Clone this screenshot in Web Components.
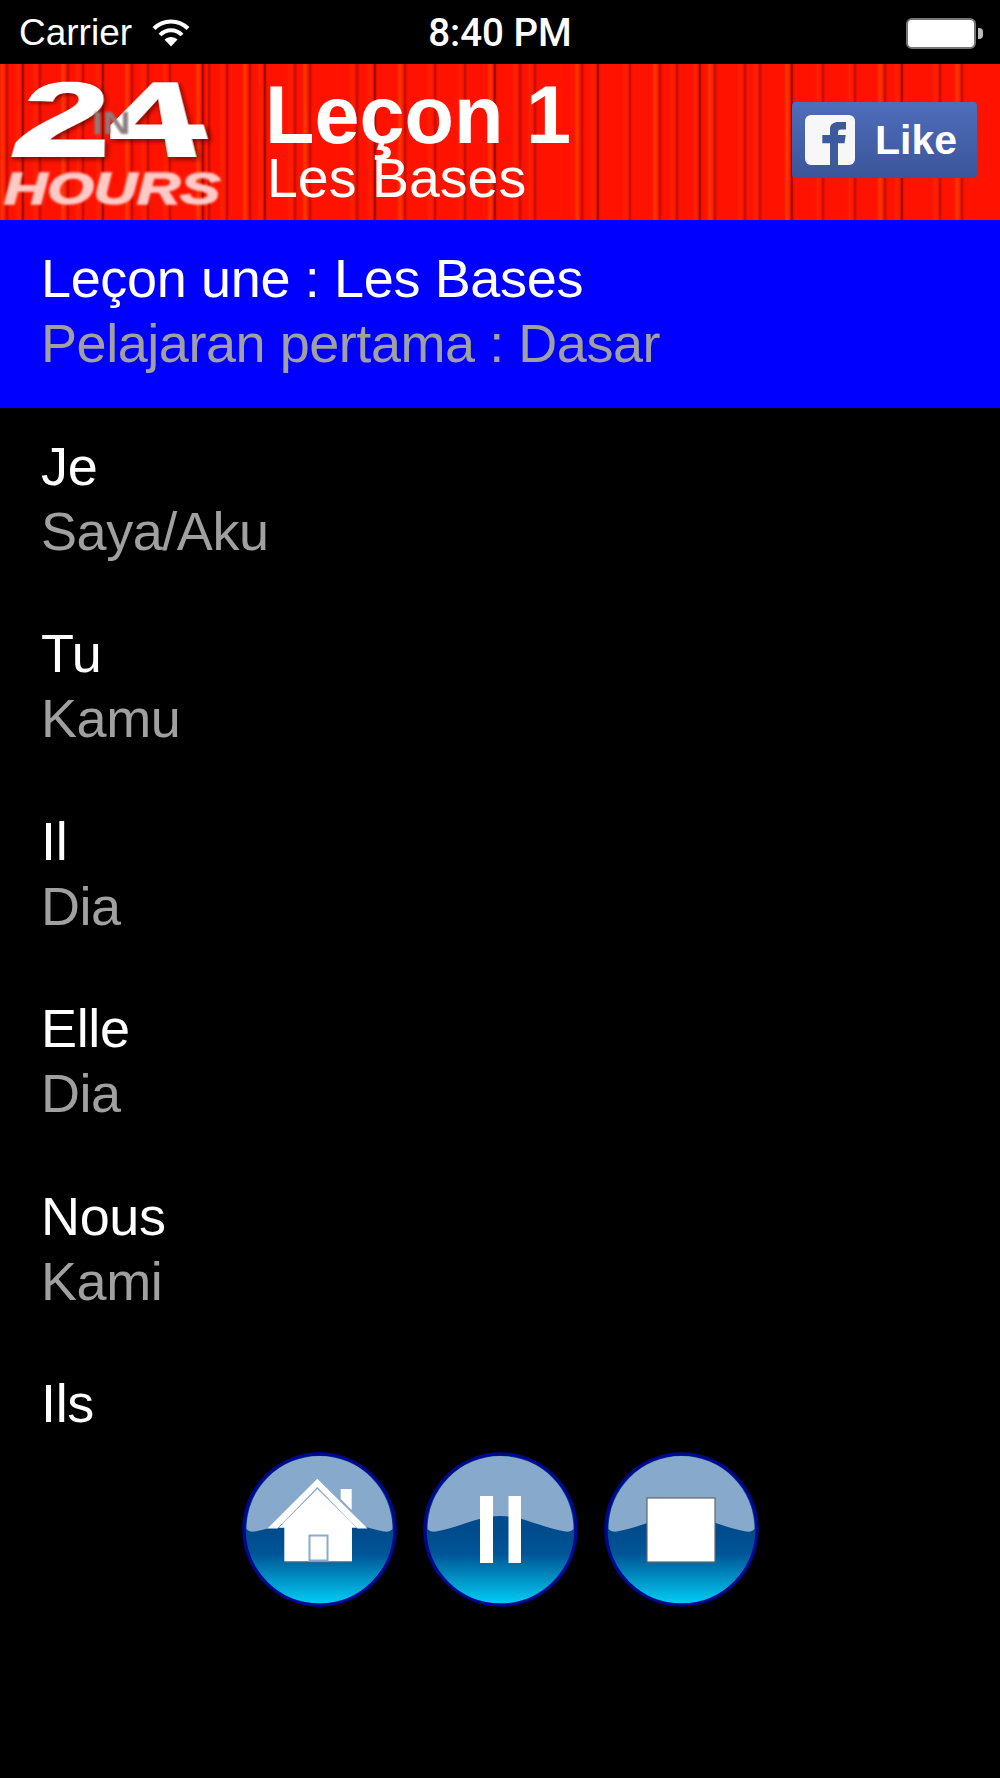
<!DOCTYPE html>
<html lang="fr">
<head>
<meta charset="utf-8">
<title>Leçon 1</title>
<style>
  html, body { margin: 0; background: #000; }
  body { width: 1000px; height: 1778px; overflow: hidden; font-family: "Liberation Sans", Arial, sans-serif; color: #fff; }
</style>
</head>
<body>
<lesson-app>
  <status-bar carrier="Carrier" time="8:40 PM"></status-bar>
  <lesson-header title="Leçon 1" subtitle="Les Bases"></lesson-header>
  <lesson-list>
    <lesson-row selected fr="Leçon une : Les Bases" id-text="Pelajaran pertama : Dasar"></lesson-row>
    <lesson-row fr="Je" id-text="Saya/Aku"></lesson-row>
    <lesson-row fr="Tu" id-text="Kamu"></lesson-row>
    <lesson-row fr="Il" id-text="Dia"></lesson-row>
    <lesson-row fr="Elle" id-text="Dia"></lesson-row>
    <lesson-row fr="Nous" id-text="Kami"></lesson-row>
    <lesson-row fr="Ils"></lesson-row>
  </lesson-list>
  <player-bar>
    <player-button icon="home"></player-button>
    <player-button icon="pause"></player-button>
    <player-button icon="stop"></player-button>
  </player-bar>
</lesson-app>

<script>
class LessonApp extends HTMLElement {
  connectedCallback() {
    this.attachShadow({ mode: 'open' });
    this.shadowRoot.innerHTML = `
      <style>
        :host { display: flex; flex-direction: column; width: 1000px; height: 1778px; background: #000; }
      </style>
      <slot></slot>`;
  }
}

class StatusBar extends HTMLElement {
  connectedCallback() {
    this.attachShadow({ mode: 'open' });
    this.shadowRoot.innerHTML = `
      <style>
        :host { display: grid; grid-template-columns: 1fr auto 1fr; align-items: center; height: 64px; background: #000; color: #fff; font: 37px/66px "Liberation Sans", Arial, sans-serif; }
        .left { display: flex; align-items: center; gap: 20px; padding-left: 19px; }
        .time { font-family: Roboto, "Liberation Sans", sans-serif; font-weight: 500; font-size: 38.5px; }
        .right { display: flex; justify-content: flex-end; align-items: center; padding-right: 17px; }
        .batt { box-sizing: border-box; width: 70px; height: 31px; background: #fff; border: 2px solid #777; border-radius: 6px; }
        .nub { width: 5px; height: 11px; background: #bbb; border-radius: 0 4px 4px 0; margin-left: 2px; }
        svg { display: block; }
        span { display: block; }
      </style>
      <div class="left">
        <span>${this.getAttribute('carrier')}</span>
        <svg width="38" height="28" viewBox="0 0 38 28" fill="none" stroke="#fff" stroke-width="4">
          <path d="M2 9.5 C11 0 27 0 36 9.5"/>
          <path d="M8 16 C14 9.5 24 9.5 30 16"/>
          <path d="M19 27.5 L12.5 20.5 C16 17 22 17 25.5 20.5 Z" fill="#fff" stroke="none"/>
        </svg>
      </div>
      <span class="time">${this.getAttribute('time')}</span>
      <div class="right"><div class="batt"></div><div class="nub"></div></div>`;
  }
}

// dark folds of the curtain, read off the reference
const FOLDS = [7,23,40,68,83,103,132,148,170,203,209,227,250,265,295,310,357,375,405,435,465,495,
  520,535,582,598,630,660,677,700,715,745,760,792,823,855,885,902,940,962];

function curtain() {
  const stops = [];
  let x = 0;
  FOLDS.forEach((f, i) => {
    const light = i % 3 === 0 ? '#ff3c00' : '#ff2200';
    const dark = i % 4 === 1 ? '#7a0800' : '#b50c00';
    stops.push(`#ff1300 ${x}px`, `#ff1300 ${f - 8}px`, `${light} ${f - 5}px`, `#ff1500 ${f - 2}px`, `${dark} ${f}px`, `#e01000 ${f + 1}px`, `#ff1300 ${f + 3}px`);
    x = f + 3;
  });
  stops.push(`#ff1300 ${x}px`, '#ff1300 1000px');
  return `linear-gradient(90deg, ${stops.join(', ')})`;
}

class LessonHeader extends HTMLElement {
  connectedCallback() {
    this.attachShadow({ mode: 'open' });
    this.shadowRoot.innerHTML = `
      <style>
        :host { display: flex; height: 156px; background-image: ${curtain()}; color: #fff; font-family: "Liberation Sans", Arial, sans-serif; }
        hours-logo { flex: none; }
        .titles { flex: none; padding-top: 19px; }
        .title { font-size: 81px; line-height: 64px; font-weight: 700; }
        .sub { font-size: 55.5px; line-height: 54px; margin: 4px 0 0 2px; }
        fb-like { margin: 38px 23px 0 auto; }
      </style>
      <hours-logo></hours-logo>
      <div class="titles">
        <div class="title">${this.getAttribute('title')}</div>
        <div class="sub">${this.getAttribute('subtitle')}</div>
      </div>
      <fb-like></fb-like>`;
  }
}

class HoursLogo extends HTMLElement {
  connectedCallback() {
    this.attachShadow({ mode: 'open' });
    this.shadowRoot.innerHTML = `
      <style>
        :host { display: block; position: relative; width: 265px; height: 156px; font-family: "Liberation Sans", Arial, sans-serif; font-weight: 700; }
        .n { width: 182px; height: 117px; margin: -24px 0 0 19px; font-size: 163px; line-height: 117px; color: #fff; -webkit-text-stroke: 4px #fff; transform-origin: 50% 100%; transform: perspective(240px) rotateX(35deg) scaleX(1.13); filter: drop-shadow(2px 3px 3px rgba(70,0,0,.7)); }
        .h { width: 160px; height: 44px; margin: 10px 0 0 4px; font-size: 44px; line-height: 44px; font-style: italic; color: #ffc9c6; -webkit-text-stroke: 1.5px #ffc9c6; transform-origin: 0 50%; transform: scaleX(1.36); filter: blur(.8px); }
        .in { position: absolute; left: 92px; top: 43px; font-size: 32px; line-height: 32px; color: #8a7d7d; transform-origin: 0 50%; transform: scaleX(1.2); filter: blur(.8px); }
      </style>
      <div class="n">24</div>
      <div class="in">IN</div>
      <div class="h">HOURS</div>`;
  }
}

class FbLike extends HTMLElement {
  connectedCallback() {
    this.attachShadow({ mode: 'open' });
    this.shadowRoot.innerHTML = `
      <style>
        :host { display: flex; align-items: center; gap: 20px; box-sizing: border-box; width: 185px; height: 76px; padding-left: 13px; border-radius: 4px; background: linear-gradient(#4e6dbb, #3b5599); color: #fff; font: 700 41px/76px "Liberation Sans", Arial, sans-serif; }
        svg { display: block; flex: none; }
      </style>
      <svg width="50" height="50" viewBox="0 0 50 50">
        <rect width="50" height="50" rx="6" fill="#f7f7f8"/>
        <path fill="#3d5a9f" d="M25 50 V28.3 H17.3 V20 H25 V14 C25 9 29 7 33 7 H41 V14.5 H36.5 C33.7 14.5 33 15.5 33 17.5 V20 H40.7 L39.5 28.3 H33 V50 Z"/>
      </svg>
      <span>Like</span>`;
  }
}

class LessonList extends HTMLElement {
  connectedCallback() {
    this.attachShadow({ mode: 'open' });
    this.shadowRoot.innerHTML = `
      <style>
        :host { display: block; height: 1232px; overflow: hidden; }
      </style>
      <slot></slot>`;
  }
}

class LessonRow extends HTMLElement {
  connectedCallback() {
    const second = this.getAttribute('id-text');
    this.attachShadow({ mode: 'open' });
    this.shadowRoot.innerHTML = `
      <style>
        :host { display: block; box-sizing: border-box; height: 187.5px; padding: 26px 0 0 41px; background: #000; font: 54px/65px "Liberation Sans", Arial, sans-serif; }
        :host([selected]) { background: #00f; }
        .fr { color: #fff; letter-spacing: -.35px; }
        .tr { color: #a0a0a0; letter-spacing: -.45px; }
      </style>
      <div class="fr">${this.getAttribute('fr')}</div>
      ${second ? `<div class="tr">${second}</div>` : ''}`;
  }
}

class PlayerBar extends HTMLElement {
  connectedCallback() {
    this.attachShadow({ mode: 'open' });
    this.shadowRoot.innerHTML = `
      <style>
        :host { display: flex; justify-content: center; gap: 26px; }
      </style>
      <slot></slot>`;
  }
}

const ICONS = {
  home: `
    <path fill="#fff" d="M75.3 26.7 L125.5 76.5 H115.5 L75.3 35 L35.5 76.5 H25.5 Z"/>
    <path fill="#fff" d="M98.7 37 H109.7 V58 L98.7 47 Z"/>
    <path fill="#55687c" d="M42.3 109.3 H110 V110.5 H42.3 Z"/>
    <path fill="#fff" d="M75.3 37 L115 75.8 H110 V109.3 H42.3 V75.8 H36.7 Z"/>
    <rect x="67.5" y="83.5" width="18" height="25" fill="#fff" stroke="#8aabcc" stroke-width="2"/>`,
  pause: `
    <rect x="57" y="44" width="13" height="67" fill="#fff"/>
    <rect x="85.5" y="44" width="12.5" height="67" fill="#fff"/>`,
  stop: `
    <rect x="43" y="46" width="68" height="64" fill="#fff" stroke="#666" stroke-width="1.2"/>`
};

class PlayerButton extends HTMLElement {
  connectedCallback() {
    this.attachShadow({ mode: 'open' });
    this.shadowRoot.innerHTML = `
      <style>
        :host { display: block; width: 155px; height: 155px; }
        svg { display: block; }
      </style>
      <svg width="155" height="155" viewBox="0 0 155 155">
        <defs>
          <linearGradient id="glass" x1="0" y1="0" x2="0" y2="1">
            <stop offset=".5" stop-color="#004b8c"/>
            <stop offset=".66" stop-color="#005596"/>
            <stop offset=".8" stop-color="#0087bd"/>
            <stop offset="1" stop-color="#00d0f8"/>
          </linearGradient>
        </defs>
        <circle cx="77.5" cy="77.5" r="75.5" fill="url(#glass)" stroke="#00078c" stroke-width="3.5"/>
        <path fill="#87a9cc" d="M4.5 77 A73 73 0 0 1 150.5 77 C149 79 146 80 142 79.5 C120 76 100 64 77.5 64 C55 64 35 76 13 79.5 C9 80 6 79 4.5 77 Z"/>
        ${ICONS[this.getAttribute('icon')]}
      </svg>`;
  }
}

customElements.define('lesson-app', LessonApp);
customElements.define('status-bar', StatusBar);
customElements.define('lesson-header', LessonHeader);
customElements.define('hours-logo', HoursLogo);
customElements.define('fb-like', FbLike);
customElements.define('lesson-list', LessonList);
customElements.define('lesson-row', LessonRow);
customElements.define('player-bar', PlayerBar);
customElements.define('player-button', PlayerButton);
</script>
</body>
</html>
